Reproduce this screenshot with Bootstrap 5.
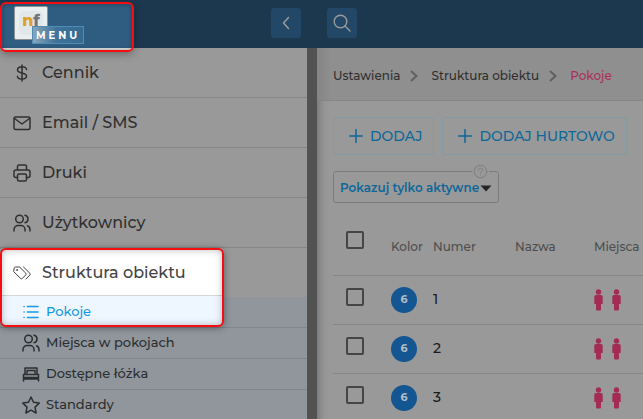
<!DOCTYPE html>
<html lang="pl">
<head>
<meta charset="utf-8">
<meta name="viewport" content="width=device-width, initial-scale=1">
<title>Pokoje</title>
<link href="https://cdn.jsdelivr.net/npm/bootstrap@5.3.0/dist/css/bootstrap.min.css" rel="stylesheet">
<style>
body { font-family: Montserrat, Inter, "Open Sans", sans-serif; font-weight: 500; background: #999; color: #303030; }
svg { display: block; flex: none; fill: none; stroke: currentColor; stroke-linecap: round; stroke-linejoin: round; }
.shell { height: 100vh; overflow: hidden; }
.side { width: 317px; }
.topbar { height: 48px; background: #1c384f; }
.main-bar { padding: 0 10px 2px; }
.side-bar { padding: 0 16px 2px; }
.tool { width: 30px; height: 30px; background: #234766; color: #9a9a9a; border-radius: 3px; }
.tool:hover { background: #2c5678; color: #fff; }
.brand { width: 34px; height: 34px; background: #e9eef1; border: 1px solid #8d9297; border-radius: 2px; left: 12px; top: 2px; }
.brand-in { width: 24px; height: 24px; background: #e2e8ea; border-radius: 5px; font-size: 16px; font-weight: 800; line-height: 20px; color: #dba32c; }
.brand-in span { color: #70767b; }
.menu-tag { left: 30px; top: 22px; width: 52px; height: 18px; padding-left: 3px; font-size: 10px; font-weight: 700; line-height: 17px; letter-spacing: 3px; color: #fff; border: 1px solid #4f8db5; background: linear-gradient(90deg, #8aa5b9, #3f7399 45%, #376a90); }
.frame { border: 2px solid #f50d12; border-radius: 6px; pointer-events: none; }
.frame-top { left: 0; top: 2px; width: 134px; height: 50px; background: linear-gradient(#2f5d82 44px, #e4e4e4 44px); box-shadow: 0 2px 8px #0005, inset 0 0 5px #0005; z-index: 3; }
.frame-row { left: 0; top: 0; width: 224px; bottom: 1px; background: linear-gradient(#fff 45px, #d4d7da 45px, #d4d7da 46px, #eef6ff 46px); box-shadow: 0 1px 7px #0006, inset 0 0 7px #0004; }
.list-zone { background: #999; border-right: 10px solid #525252; }
.entry { height: 50px; padding-left: 13px; gap: 11px; font-size: 16px; color: #303030; text-decoration: none; border-bottom: 1px solid #868686; }
.entry svg { width: 18px; height: 18px; stroke-width: 1.5; }
.entry.open { height: 49px; border: 0; color: #444; }
.entry .fine { stroke-width: 1; }
.sub { height: 31px; padding-left: 22px; gap: 6px; font-size: 13px; color: #2c2e30; text-decoration: none; background: #90969b; border-bottom: 1px solid #80868a; }
.sub svg { width: 18px; height: 18px; stroke-width: 1.5; }
.sub.current { color: #139ae0; }
.lift { z-index: 1; }
.content { min-width: 0; box-shadow: inset 12px 0 10px -10px #0004; }
.trail { height: 53px; padding: 3px 16px 0; gap: 10px; font-size: 12px; border-bottom: 1px solid #858585; background: linear-gradient(90deg, #858585, #8f8f8f 14px); }
.trail a { color: #303030; text-decoration: none; }
.trail svg { margin-right: 3px; stroke-width: 2; stroke: #606060; stroke-linecap: butt; stroke-linejoin: miter; }
.pink { color: #ab2f5a; }
.work { padding: 16px 14px 0 16px; }
.add { height: 38px; padding: 0 11px 0 15px; gap: 7px; font-size: 14px; font-weight: 500; color: #0e6798; border: 1px solid #8299a6; border-radius: 3px; }
.add:hover { background: #8fa1ac; color: #0e6798; }
.pick { margin-top: 16px; width: 166px; }
.pick select { appearance: none; width: 100%; height: 32px; padding: 2px 16px 0 6px; font-size: 12px; font-weight: 600; color: #0e6798; background: transparent; border: 1px solid #7c7c7c; border-radius: 3px; }
.pick .caret { right: 7px; top: 14px; fill: #252525; stroke: none; pointer-events: none; }
.help { right: 10px; top: -8px; width: 17px; height: 16px; padding: 0 1px; border: 0; background: #999; color: #7e7e7e; }
.grid { table-layout: fixed; width: calc(100% + 14px); margin-top: 15px; font-size: 12px; }
.grid td, .grid th { padding: 0; vertical-align: middle; border-bottom: 1px solid #868686; }
.grid th { height: 57px; padding-top: 2px; font-weight: 500; color: #4e4e4e; }
.grid td { height: 49px; font-size: 14px; color: #1b1b1b; }
.grid input { appearance: none; display: block; width: 18px; height: 18px; margin: 0 0 5px 13px; border: 2px solid #454545; border-radius: 2px; }
.grid input:checked { background: #454545; }
.grid thead input { margin-bottom: 14px; }
.dot { width: 26px; height: 26px; background: #145691; color: #b4bdc5; font-size: 11px; font-weight: 700; }
.c-tick { width: 58px; } .c-color { width: 42px; } .c-num { width: 82px; } .c-name { width: 79px; }
.people { gap: 9px; }
.people svg { fill: #a32b54; stroke: none; }
</style>
<script src="https://cdn.jsdelivr.net/npm/bootstrap@5.3.0/dist/js/bootstrap.bundle.min.js"></script>
</head>
<body>
<svg class="d-none" xmlns="http://www.w3.org/2000/svg">
  <symbol id="users" viewBox="0 0 18 18"><circle cx="6.500" cy="5" r="3.800"/><path d="M1 17v-1.500a4 4 0 0 1 4-4h3a4 4 0 0 1 4 4V17M12 1.300c4 .7 4 6.700 0 7.400M14.500 11.700c1.700.6 2.500 2 2.500 3.800V17"/></symbol>
  <symbol id="person" viewBox="0 0 9 22"><circle cx="4.500" cy="3" r="2.700"/><path d="M2 6h5q1.700 0 1.700 1.700V15H7v5.500q0 1-1 1H3q-1 0-1-1V15H.3V7.700Q.3 6 2 6z"/></symbol>
  <symbol id="plus" viewBox="0 0 14 14"><path d="M7 .5v13M.5 7h13"/></symbol>
  <symbol id="next" viewBox="0 0 8 12"><path d="M1 1l5.500 5L1 11"/></symbol>
</svg>
<div class="shell d-flex">
  <aside class="side d-flex flex-column flex-shrink-0">
    <header class="topbar side-bar position-relative d-flex align-items-center justify-content-end flex-shrink-0">
      <div class="frame frame-top position-absolute">
        <div class="brand position-absolute d-flex align-items-center justify-content-center"><div class="brand-in text-center">n<span>f</span></div></div>
        <div class="menu-tag position-absolute">MENU</div>
      </div>
      <button class="tool btn border-0 p-0 d-flex align-items-center justify-content-center" type="button" aria-label="Zwiń menu"><svg width="8" height="14" viewBox="0 0 8 14" stroke-width="1.500"><path d="M6.500 1.500L1.500 7l5 5.500"/></svg></button>
    </header>
    <nav class="list-zone flex-grow-1" aria-label="Menu">
      <a href="#" class="entry d-flex align-items-center"><svg viewBox="0 0 18 18"><path d="M9 1v16M13.500 5.500C13.500 1.800 4.500 2 4.500 6c0 4 9 2 9 6.200 0 4-9 3.800-9 .1"/></svg>Cennik</a>
      <a href="#" class="entry d-flex align-items-center"><svg viewBox="0 0 18 18"><rect x="1" y="3" width="16" height="12.500" rx="1.500"/><path d="M1.500 4.500L9 10l7.500-5.500"/></svg>Email / SMS</a>
      <a href="#" class="entry d-flex align-items-center"><svg viewBox="0 0 18 18"><path d="M4.500 6V2.500Q4.500 1 6 1h6q1.500 0 1.500 1.500V6M4.500 13.500H3q-2 0-2-2V8q0-2 2-2h12q2 0 2 2v3.500q0 2-2 2h-1.500"/><rect x="4.500" y="10" width="9" height="7" rx="1.500"/></svg>Druki</a>
      <a href="#" class="entry d-flex align-items-center"><svg><use href="#users"/></svg>Użytkownicy</a>
      <div class="position-relative">
        <div class="frame frame-row position-absolute lift"></div>
        <a href="#" class="entry open d-flex align-items-center position-relative lift"><svg class="fine" viewBox="0 0 18 18"><path d="M1 4.500Q1 3 2.500 3h4L12.800 9.200q.8.800 0 1.600l-3.500 3.700q-.8.800-1.600 0L1 8zM10.500 3l6.400 6.300q.8.900 0 1.700L13 15"/><circle cx="4" cy="6" r=".5"/></svg>Struktura obiektu</a>
        <a href="#" class="sub current d-flex align-items-center"><svg class="position-relative lift" viewBox="0 0 18 18"><path d="M5.500 3.500H16M5.500 9H16M5.500 14.500H16M2 3.500h.1M2 9h.1M2 14.500h.1"/></svg><span class="position-relative lift">Pokoje</span></a>
      </div>
      <a href="#" class="sub d-flex align-items-center"><svg><use href="#users"/></svg>Miejsca w pokojach</a>
      <a href="#" class="sub d-flex align-items-center"><svg viewBox="0 0 18 18"><path d="M3 8.500V3h12v5.500M5 8V5.500h8V8M1.500 9.500h15v3h-15zM1.500 12v4M16.500 12v4M1.500 14h15"/></svg>Dostępne łóżka</a>
      <a href="#" class="sub d-flex align-items-center"><svg viewBox="0 0 18 18"><path d="M9 1l2.500 5.300 5.700.8-4.200 4 1.100 5.900L9 14.200 3.900 17 5 11.100.8 7.100l5.700-.8z"/></svg>Standardy</a>
    </nav>
  </aside>
  <main class="content flex-grow-1">
    <header class="topbar main-bar d-flex align-items-center">
      <button class="tool btn border-0 p-0 d-flex align-items-center justify-content-center" type="button" aria-label="Szukaj"><svg width="18" height="18" viewBox="0 0 18 18" stroke-width="1.400"><circle cx="7.500" cy="7.500" r="6.300"/><path d="M12 12l5 5"/></svg></button>
    </header>
    <nav class="trail d-flex align-items-center text-nowrap" aria-label="Ścieżka">
      <a href="#">Ustawienia</a><svg width="8" height="12"><use href="#next"/></svg>
      <a href="#">Struktura obiektu</a><svg width="8" height="12"><use href="#next"/></svg>
      <span class="pink">Pokoje</span>
    </nav>
    <section class="work">
      <div class="d-flex gap-2">
        <button class="add btn d-flex align-items-center text-nowrap" type="button"><svg width="14" height="14" stroke-width="1.500"><use href="#plus"/></svg>DODAJ</button>
        <button class="add btn d-flex align-items-center text-nowrap" type="button"><svg width="14" height="14" stroke-width="1.500"><use href="#plus"/></svg>DODAJ HURTOWO</button>
      </div>
      <div class="pick position-relative">
        <select aria-label="Filtr pokoi"><option>Pokazuj tylko aktywne</option><option>Pokazuj wszystkie</option></select>
        <svg class="caret position-absolute" width="12" height="7" viewBox="0 0 12 7"><path d="M.5.5h11L6 6.500z"/></svg>
        <button class="help position-absolute" type="button" aria-label="Pomoc"><svg width="15" height="15" viewBox="0 0 15 15" stroke-width="1"><circle cx="7.500" cy="7.500" r="6.300"/><path d="M5.500 6c0-2.700 4-2.500 4 0 0 1.500-2 1.300-2 3M7.500 11v.2"/></svg></button>
      </div>
      <table class="grid">
        <thead><tr><th class="c-tick"><input type="checkbox" aria-label="Zaznacz wszystkie"></th><th class="c-color">Kolor</th><th class="c-num">Numer</th><th class="c-name">Nazwa</th><th>Miejsca</th></tr></thead>
        <tbody>
          <tr><td><input type="checkbox" aria-label="Zaznacz pokój 1"></td><td><span class="dot rounded-circle d-flex align-items-center justify-content-center">6</span></td><td>1</td><td></td><td><div class="people d-flex"><svg width="9" height="22"><use href="#person"/></svg><svg width="9" height="22"><use href="#person"/></svg></div></td></tr>
          <tr><td><input type="checkbox" aria-label="Zaznacz pokój 2"></td><td><span class="dot rounded-circle d-flex align-items-center justify-content-center">6</span></td><td>2</td><td></td><td><div class="people d-flex"><svg width="9" height="22"><use href="#person"/></svg><svg width="9" height="22"><use href="#person"/></svg></div></td></tr>
          <tr><td><input type="checkbox" aria-label="Zaznacz pokój 3"></td><td><span class="dot rounded-circle d-flex align-items-center justify-content-center">6</span></td><td>3</td><td></td><td><div class="people d-flex"><svg width="9" height="22"><use href="#person"/></svg><svg width="9" height="22"><use href="#person"/></svg></div></td></tr>
        </tbody>
      </table>
    </section>
  </main>
</div>
</body>
</html>
